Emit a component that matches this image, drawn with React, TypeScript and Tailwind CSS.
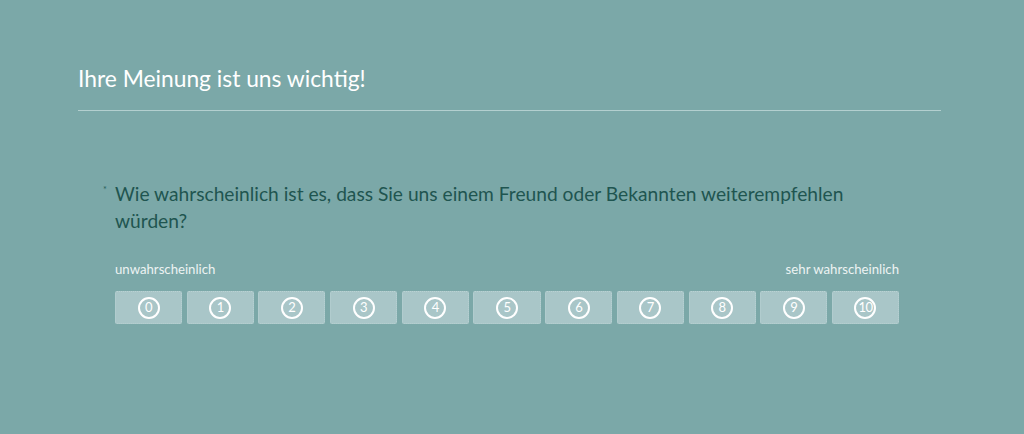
const scores = [0, 1, 2, 3, 4, 5, 6, 7, 8, 9, 10];

function ScoreButton({ value }: { value: number }) {
  return (
    <button
      type="button"
      className="h-[33px] flex items-center justify-center bg-[#a9c6c8] rounded-[2px] border border-dotted border-[#b9d2d3]"
    >
      <span className="w-[22px] h-[22px] rounded-full border-2 border-white flex items-center justify-center text-white text-[13px] leading-none tracking-[-0.5px]">
        {value}
      </span>
    </button>
  );
}

export default function App() {
  return (
    <div
      className="w-[1024px] h-[434px] bg-[#7ba8a8] overflow-hidden"
      style={{ fontFamily: "Lato, 'Open Sans', sans-serif" }}
    >
      <div className="pl-[78px] pr-[83px] pt-[62px]">
        <h1 className="text-[22.8px] leading-[32px] text-white">Ihre Meinung ist uns wichtig!</h1>
        <div className="mt-[16px] h-px bg-[#b3cfcf]" />

        <div className="mt-[69px] pl-[25px] pr-[42px] flex">
          <span className="w-[12px] text-[9px] leading-[20px] text-[#2a5f5a]">*</span>
          <div className="flex-1">
            <p className="text-[19.2px] leading-[27px] text-[#1f5550]">
              Wie wahrscheinlich ist es, dass Sie uns einem Freund oder Bekannten weiterempfehlen würden?
            </p>
            <div className="mt-[26px] flex justify-between text-[13.2px] leading-[18px] text-[#edf3f3]">
              <span>unwahrscheinlich</span>
              <span>sehr wahrscheinlich</span>
            </div>
            <div className="mt-[13px] grid grid-cols-11 gap-[4.7px]">
              {scores.map((s) => (
                <ScoreButton key={s} value={s} />
              ))}
            </div>
          </div>
        </div>
      </div>
    </div>
  );
}
